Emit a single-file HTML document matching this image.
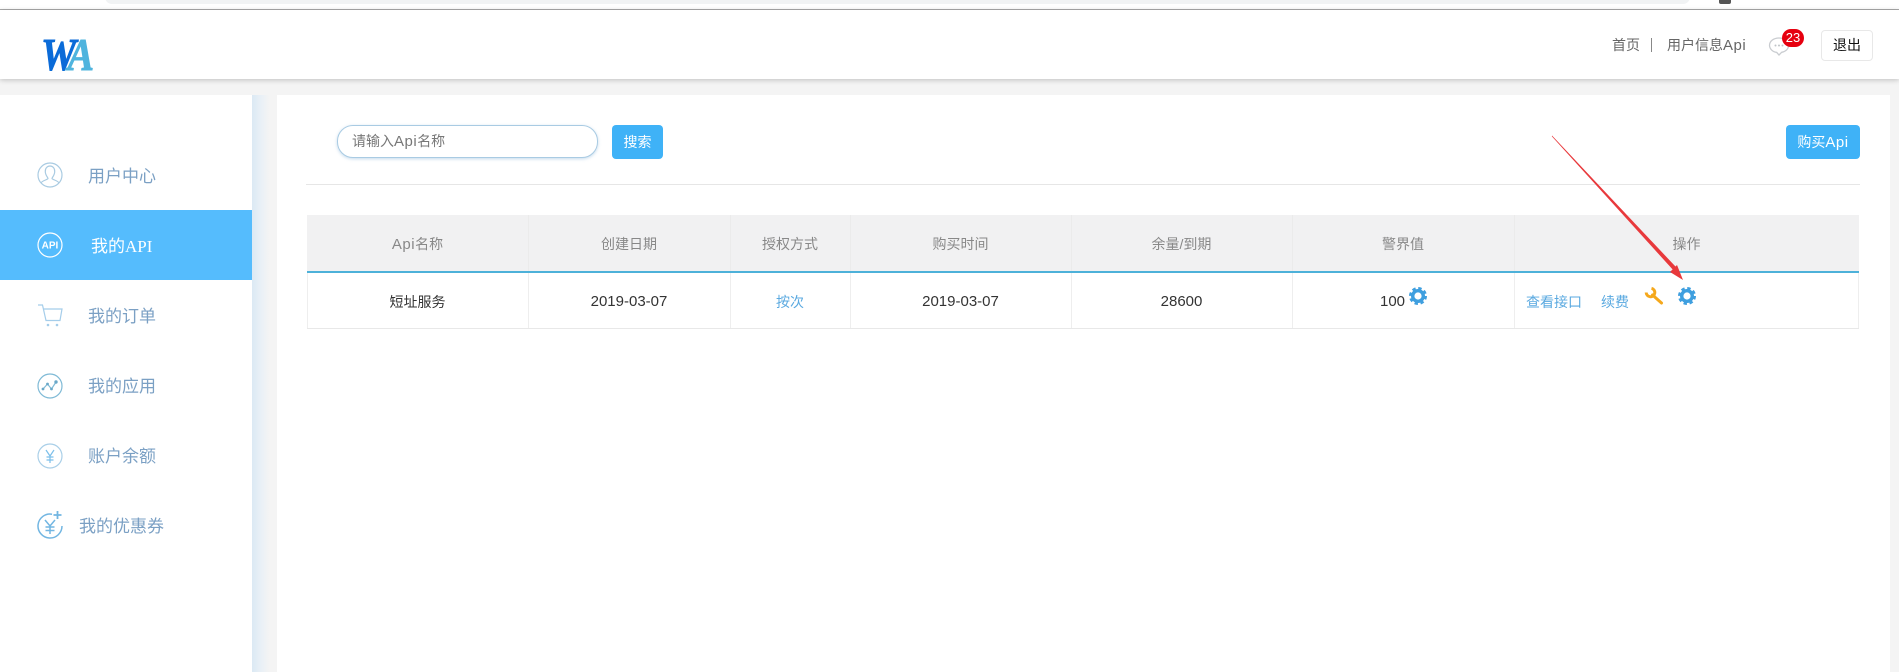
<!DOCTYPE html>
<html lang="zh">
<head>
<meta charset="utf-8">
<title>我的API</title>
<style>
html,body{margin:0;padding:0;width:1899px;height:672px;overflow:hidden;background:#f4f4f4;font-family:"Liberation Sans","Noto Sans CJK SC",sans-serif;font-size:14px;color:#333}
.a{position:absolute;white-space:nowrap}
.c{position:absolute;text-align:center;white-space:nowrap}
.p{font-size:15px;letter-spacing:.5px}
#top{left:0;top:0;width:1899px;height:9px;background:#fff;border-bottom:1px solid #aaa;box-sizing:content-box}
#omni{left:105px;top:-10px;width:1585px;height:14px;background:#f1f3f4;border-radius:12px}
#tab{left:1719px;top:0;width:12px;height:4px;background:#555;border-radius:0 0 2px 2px}
#head{left:0;top:10px;width:1899px;height:69px;background:#fff;box-shadow:0 1px 5px rgba(0,0,0,.22)}
#side{left:0;top:95px;width:252px;height:577px;background:#fff}
#strip{left:252px;top:95px;width:25px;height:577px;background:linear-gradient(90deg,#dbe9f4,#e9f0f6 35%,#f4f4f4 70%)}
#main{left:277px;top:95px;width:1613px;height:577px;background:#fff}
.m{font-family:"Liberation Serif","Noto Sans CJK SC",serif;font-size:17px;color:#7ba0c4;line-height:24px}
.th{color:#888;line-height:20px;top:234px}
.td{line-height:20px;top:292px}
.d{font-size:15px}
.ln{position:absolute;background:#eeeeee;width:1px}
.thl{position:absolute;background:#ebebeb;width:1px;top:215px;height:56px}
</style>
</head>
<body>
<div class="a" id="top"></div>
<div class="a" id="omni"></div>
<div class="a" id="tab"></div>
<div class="a" id="head"></div>

<div class="a" style="left:41px;top:32px;font:italic bold 46px/46px 'Liberation Serif',serif;color:#0b6bd8;letter-spacing:-10px;transform:scaleX(.86);transform-origin:0 0;-webkit-text-stroke:.9px #0b6bd8">W<span style="color:#4fb4de;letter-spacing:0;-webkit-text-stroke:.9px #4fb4de">A</span></div>

<div class="a" style="left:1612px;top:35px;color:#666;line-height:20px">首页</div>
<div class="a" style="left:1651px;top:38px;width:1px;height:14px;background:#888"></div>
<div class="a" style="left:1667px;top:35px;color:#666;line-height:20px">用户信息<span class="p">Api</span></div>
<svg class="a" style="left:1768px;top:36px" width="24" height="22" viewBox="0 0 24 22"><path d="M11 2C5.500 2 1.500 5.300 1.500 9.300c0 3.700 3.400 6.700 7.200 7.100L11 19l2.600-2.700c4-.6 7-3.400 7-7C20.600 5.300 16.500 2 11 2z" fill="#fff" stroke="#c9ccd0" stroke-width="1.300"/><circle cx="7.500" cy="9.500" r="1" fill="#c0c4c8"/><circle cx="11" cy="9.500" r="1" fill="#c0c4c8"/><circle cx="14.500" cy="9.500" r="1" fill="#c0c4c8"/></svg>
<div class="c" style="left:1782px;top:29px;width:22px;height:18px;border-radius:9px;background:#e6000f;color:#fff;font-size:13px;line-height:18px">23</div>
<div class="c" style="left:1821px;top:30px;width:50px;height:29px;border:1px solid #e8e8e8;border-radius:4px;background:#fff;color:#111;line-height:29px">退出</div>

<div class="a" id="side"></div>
<div class="a" id="strip"></div>
<div class="a" id="main"></div>

<!-- sidebar -->
<div class="a" style="left:0;top:210px;width:252px;height:70px;background:#55bcfd"></div>

<svg class="a" style="left:36px;top:161px" width="28" height="28" viewBox="0 0 28 28" fill="none" stroke="#a9cbe2" stroke-width="1.200"><circle cx="14" cy="14" r="12"/><path d="M5 22c1-2.500 6.300-3 7-4.500 0-1-2.500-3-2.700-6.500C9 7.500 11 5 14 5s5 2.500 4.700 6c-.2 3.500-2.700 5.500-2.700 6.500.7 1.500 6 2 7 4.500"/></svg>
<div class="a m" style="left:88px;top:165px">用户中心</div>

<svg class="a" style="left:36px;top:231px" width="28" height="28" viewBox="0 0 28 28"><circle cx="14" cy="14" r="12" fill="none" stroke="#fff" stroke-width="1.200"/><text x="14" y="17.500" text-anchor="middle" font-family="Liberation Sans,sans-serif" font-weight="bold" font-size="10" fill="#fff">API</text></svg>
<div class="a m" style="left:91px;top:235px;color:#fff">我的API</div>

<svg class="a" style="left:38px;top:303px" width="28" height="26" viewBox="0 0 28 26" fill="none" stroke="#a5cdea" stroke-width="1.200"><path d="M0 2h4.500l3.500 15.500h14L24 6H5.500"/><circle cx="10" cy="22" r="1.300" fill="#a5cdea" stroke="none"/><circle cx="19" cy="22" r="1.300" fill="#a5cdea" stroke="none"/></svg>
<div class="a m" style="left:88px;top:305px">我的订单</div>

<svg class="a" style="left:36px;top:372px" width="28" height="28" viewBox="0 0 28 28" fill="none" stroke="#7fbad6" stroke-width="1.200"><circle cx="14" cy="14" r="12"/><path d="M7 17l4.500-5 4 5L20 10"/><circle cx="7" cy="17" r="1.400" fill="#6aa8c8" stroke="none"/><circle cx="11.500" cy="12" r="1.400" fill="#6aa8c8" stroke="none"/><circle cx="15.500" cy="17" r="1.400" fill="#6aa8c8" stroke="none"/><circle cx="20" cy="10" r="1.700" fill="#6aa8c8" stroke="none"/></svg>
<div class="a m" style="left:88px;top:375px">我的应用</div>

<svg class="a" style="left:36px;top:442px" width="28" height="28" viewBox="0 0 28 28" fill="none" stroke="#a9cfe8" stroke-width="1.200"><circle cx="14" cy="14" r="12"/><path d="M10 8l4 6 4-6M14 14v7M10.500 15h7M10.500 18h7" stroke="#7cbfea"/></svg>
<div class="a m" style="left:88px;top:445px">账户余额</div>

<svg class="a" style="left:36px;top:509px" width="28" height="30" viewBox="0 0 28 30" fill="none" stroke="#72b6e2" stroke-width="1.500"><path d="M16 5.200A12 12 0 1 0 26 17"/><path d="M9 11l5 6 5-6M14 17v8M9.500 18h9M9.500 21.500h9"/><path d="M21.500 2v8M17.500 6h8" stroke-width="1.800"/></svg>
<div class="a m" style="left:79px;top:515px">我的优惠券</div>

<!-- search -->
<div class="a" style="left:337px;top:125px;width:259px;height:31px;border:1px solid #a9cbe3;border-radius:16px;background:#fff;box-shadow:0 1px 3px rgba(90,150,200,.35)"></div>
<div class="a" style="left:352px;top:131px;color:#777;line-height:20px">请输入<span class="p">Api</span>名称</div>
<div class="c" style="left:612px;top:125px;width:51px;height:34px;background:#3fb2f7;border-radius:4px;color:#fff;line-height:34px">搜索</div>
<div class="c" style="left:1786px;top:125px;width:74px;height:34px;background:#3fb2f7;border-radius:4px;color:#fff;line-height:34px">购买<span class="p">Api</span></div>
<div class="a" style="left:306px;top:184px;width:1554px;height:1px;background:#e6e6e6"></div>

<!-- table -->
<div class="a" style="left:307px;top:215px;width:1552px;height:56px;background:#f1f1f2"></div>
<div class="a" style="left:307px;top:271px;width:1552px;height:2px;background:#4db1d9"></div>
<div class="a" style="left:307px;top:328px;width:1552px;height:1px;background:#e8e8e8"></div>
<div class="ln" style="left:307px;top:273px;height:55px"></div>
<div class="ln" style="left:528px;top:273px;height:55px"></div>
<div class="ln" style="left:730px;top:273px;height:55px"></div>
<div class="ln" style="left:850px;top:273px;height:55px"></div>
<div class="ln" style="left:1071px;top:273px;height:55px"></div>
<div class="ln" style="left:1292px;top:273px;height:55px"></div>
<div class="ln" style="left:1514px;top:273px;height:55px"></div>
<div class="ln" style="left:1858px;top:273px;height:55px"></div>
<div class="thl" style="left:528px"></div>
<div class="thl" style="left:730px"></div>
<div class="thl" style="left:850px"></div>
<div class="thl" style="left:1071px"></div>
<div class="thl" style="left:1292px"></div>
<div class="thl" style="left:1514px"></div>

<div class="c th" style="left:307px;width:221px"><span class="p">Api</span>名称</div>
<div class="c th" style="left:528px;width:202px">创建日期</div>
<div class="c th" style="left:730px;width:120px">授权方式</div>
<div class="c th" style="left:850px;width:221px">购买时间</div>
<div class="c th" style="left:1071px;width:221px">余量/到期</div>
<div class="c th" style="left:1292px;width:222px">警界值</div>
<div class="c th" style="left:1514px;width:345px">操作</div>

<div class="c td" style="left:307px;width:221px">短址服务</div>
<div class="c td d" style="left:528px;width:202px">2019-03-07</div>
<div class="c td" style="left:730px;width:120px;color:#5aa9e0">按次</div>
<div class="c td d" style="left:850px;width:221px">2019-03-07</div>
<div class="c td d" style="left:1071px;width:221px">28600</div>
<div class="a td d" style="left:1380px">100</div>

<svg class="a" style="left:1409px;top:287px" width="18" height="18" viewBox="0 0 18 18"><circle cx="9" cy="9" r="5.300" fill="none" stroke="#3f9fdf" stroke-width="3.400"/><circle cx="9" cy="9" r="7.700" fill="none" stroke="#3f9fdf" stroke-width="2.600" stroke-dasharray="3.400 2.650"/></svg>

<div class="a td" style="left:1526px;color:#5aa9e0">查看接口</div>
<div class="a td" style="left:1601px;color:#5aa9e0">续费</div>
<svg class="a" style="left:1644px;top:286px" width="20" height="20" viewBox="0 0 20 20" fill="none" stroke="#f5a81c" stroke-width="3"><path d="M7.500 2.300A4.300 4.300 0 1 1 2.200 6.500"/><path d="M8.500 9l9 8" stroke-linecap="round"/></svg>
<svg class="a" style="left:1678px;top:287px" width="18" height="18" viewBox="0 0 18 18"><circle cx="9" cy="9" r="5.300" fill="none" stroke="#3f9fdf" stroke-width="3.400"/><circle cx="9" cy="9" r="7.700" fill="none" stroke="#3f9fdf" stroke-width="2.600" stroke-dasharray="3.400 2.650"/></svg>

<!-- annotation arrow -->
<svg class="a" style="left:0;top:0" width="1899" height="672" viewBox="0 0 1899 672"><path d="M1552 136L1673.500 270 1676 267.500z" fill="#e8393c" stroke="#e8393c" stroke-width=".6"/><path d="M1683 280l-13-8 7-7z" fill="#e8393c"/></svg>
</body>
</html>
